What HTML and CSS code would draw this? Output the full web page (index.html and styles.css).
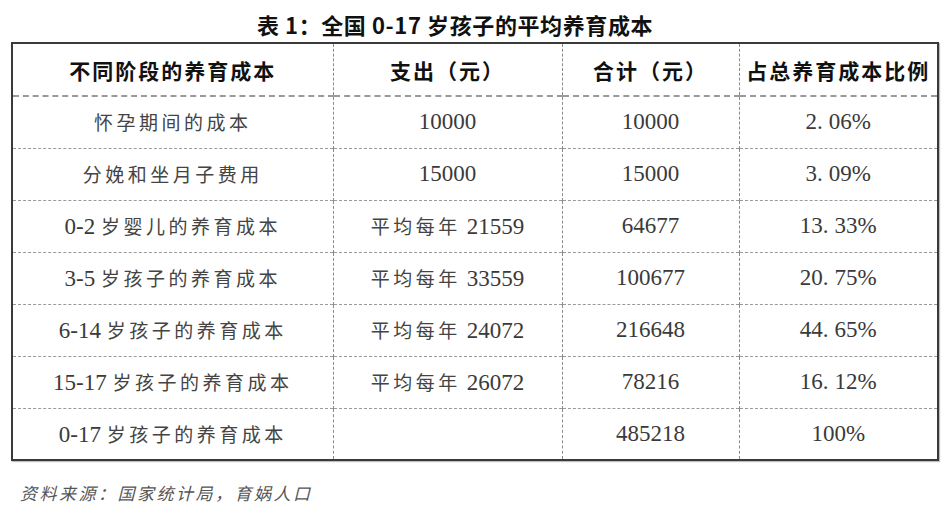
FILE: index.html
```html
<!DOCTYPE html>
<html lang="zh-CN">
<head>
<meta charset="utf-8">
<title>表1：全国0-17岁孩子的平均养育成本</title>
<link rel="stylesheet" href="styles.css">
</head>
<body>
<div class="page">
  <h1 class="title">表 1：全国 0-17 岁孩子的平均养育成本</h1>
  <table class="cost-table">
    <colgroup>
      <col class="c1"><col class="c2"><col class="c3"><col class="c4">
    </colgroup>
    <thead>
      <tr>
        <th>不同阶段的养育成本</th>
        <th>支出（元）</th>
        <th>合计（元）</th>
        <th>占总养育成本比例</th>
      </tr>
    </thead>
    <tbody>
      <tr>
        <td><span class="cjk">怀孕期间的成本</span></td>
        <td>10000</td>
        <td>10000</td>
        <td>2<span class="dot">.</span>06%</td>
      </tr>
      <tr>
        <td><span class="cjk">分娩和坐月子费用</span></td>
        <td>15000</td>
        <td>15000</td>
        <td>3<span class="dot">.</span>09%</td>
      </tr>
      <tr>
        <td>0-2 <span class="cjk">岁婴儿的养育成本</span></td>
        <td><span class="cjk">平均每年</span> 21559</td>
        <td>64677</td>
        <td>13<span class="dot">.</span>33%</td>
      </tr>
      <tr>
        <td>3-5 <span class="cjk">岁孩子的养育成本</span></td>
        <td><span class="cjk">平均每年</span> 33559</td>
        <td>100677</td>
        <td>20<span class="dot">.</span>75%</td>
      </tr>
      <tr>
        <td>6-14 <span class="cjk">岁孩子的养育成本</span></td>
        <td><span class="cjk">平均每年</span> 24072</td>
        <td>216648</td>
        <td>44<span class="dot">.</span>65%</td>
      </tr>
      <tr>
        <td>15-17 <span class="cjk">岁孩子的养育成本</span></td>
        <td><span class="cjk">平均每年</span> 26072</td>
        <td>78216</td>
        <td>16<span class="dot">.</span>12%</td>
      </tr>
      <tr>
        <td>0-17 <span class="cjk">岁孩子的养育成本</span></td>
        <td></td>
        <td>485218</td>
        <td>100%</td>
      </tr>
    </tbody>
  </table>
  <p class="source">资料来源：国家统计局，育娲人口</p>
</div>
</body>
</html>
```
FILE: styles.css
```css
* {
  box-sizing: border-box;
}

html, body {
  margin: 0;
  padding: 0;
  background: #ffffff;
}

.page {
  width: 946px;
  padding: 10px 0 0 11px;
}

.title {
  margin: 0;
  width: 926px;
  padding-right: 38px;
  text-align: center;
  font-family: "Noto Sans CJK SC", "Liberation Sans", sans-serif;
  font-weight: 700;
  font-size: 22px;
  line-height: 28px;
  letter-spacing: 0.6px;
  color: #111111;
}

.cost-table {
  margin-top: 4px;
  width: 926px;
  table-layout: fixed;
  border-collapse: collapse;
  border: 2px solid #3a3a3a;
  box-shadow: 1px 1px 1px rgba(0, 0, 0, 0.25);
}

.c1 { width: 321px; }
.c2 { width: 229px; }
.c3 { width: 177px; }
.c4 { width: 199px; }

.cost-table th {
  height: 53px;
  padding: 0;
  text-align: center;
  vertical-align: middle;
  font-family: "Noto Sans CJK SC", "Liberation Sans", sans-serif;
  font-weight: 700;
  font-size: 21px;
  letter-spacing: 2px;
  color: #111111;
  border-left: 1px dashed #8a8a8a;
  border-bottom: 2px dashed #9a9a9a;
}

.cost-table td {
  height: 52px;
  padding: 0;
  text-align: center;
  vertical-align: middle;
  font-family: "Liberation Serif", "Noto Sans CJK SC", serif;
  font-size: 23px;
  color: #3a3a3a;
  border-left: 1px dashed #8a8a8a;
  border-top: 1px dashed #9a9a9a;
}

.cost-table tbody tr:first-child td {
  border-top: none;
}

.cjk {
  font-family: "Noto Sans CJK SC", sans-serif;
  font-size: 19px;
  font-weight: 400;
  letter-spacing: 3.5px;
  color: #444444;
}

.dot {
  padding-right: 6px;
}

.source {
  margin: 20px 0 0 9px;
  font-family: "Noto Sans CJK SC", sans-serif;
  font-style: italic;
  font-size: 17px;
  line-height: 24px;
  letter-spacing: 2.5px;
  color: #555555;
}
```
